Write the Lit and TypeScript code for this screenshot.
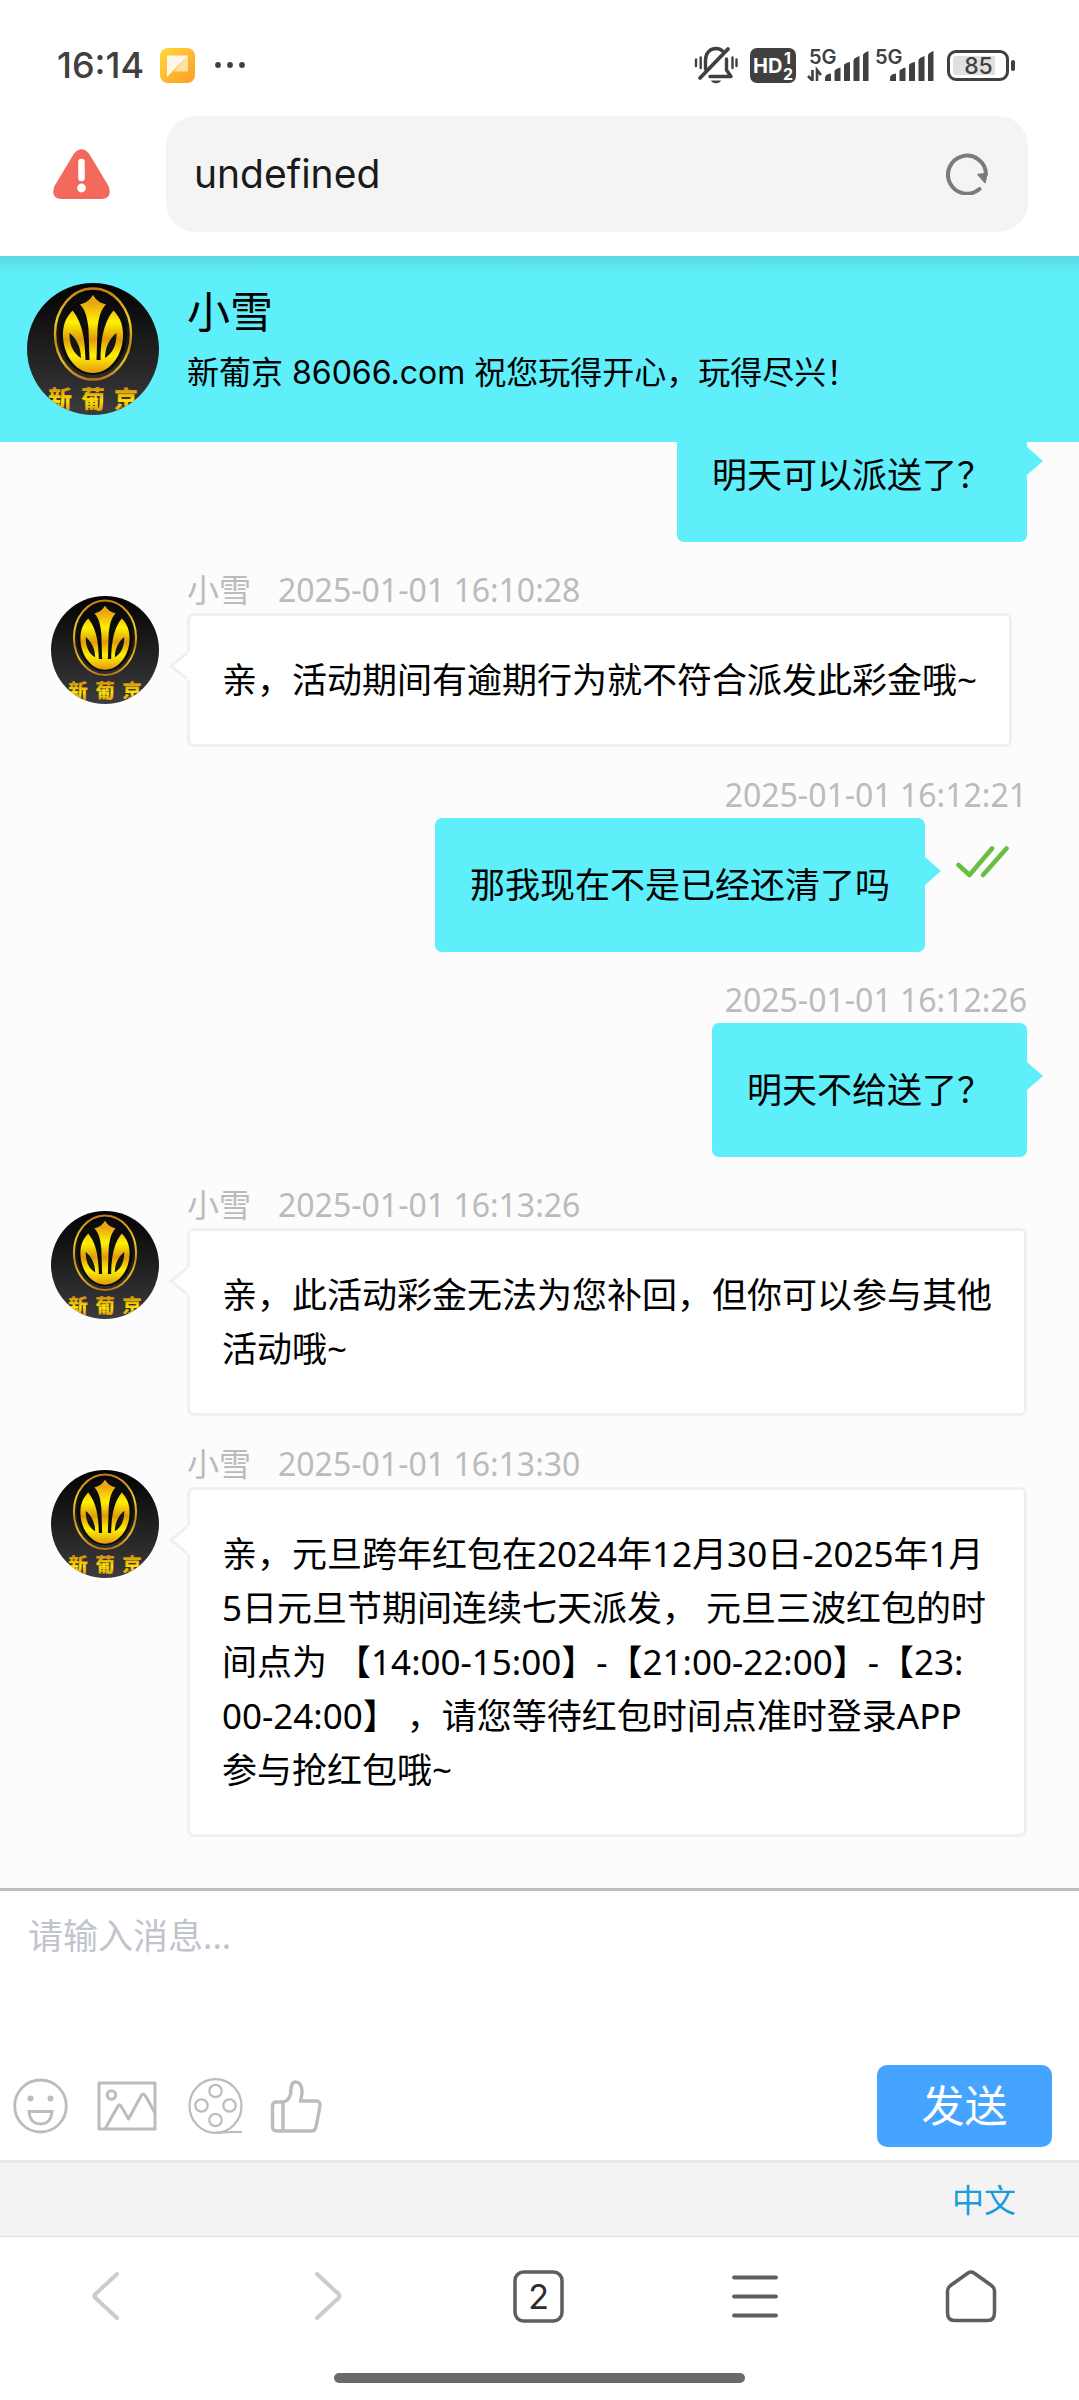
import { LitElement, html, css, svg, nothing } from "lit";
import { customElement, property, state } from "lit/decorators.js";
import { classMap } from "lit/directives/class-map.js";

interface Message {
  from: "agent" | "me";
  text: string;
  time?: string;
  read?: boolean;
}

const AGENT = "小雪";

const MESSAGES: Message[] = [
  { from: "me", text: "明天可以派送了？" },
  { from: "agent", time: "2025-01-01 16:10:28", text: "亲，活动期间有逾期行为就不符合派发此彩金哦~" },
  { from: "me", time: "2025-01-01 16:12:21", text: "那我现在不是已经还清了吗", read: true },
  { from: "me", time: "2025-01-01 16:12:26", text: "明天不给送了？" },
  { from: "agent", time: "2025-01-01 16:13:26", text: "亲，此活动彩金无法为您补回，但你可以参与其他活动哦~" },
  {
    from: "agent",
    time: "2025-01-01 16:13:30",
    text: "亲，元旦跨年红包在2024年12月30日-2025年1月5日元旦节期间连续七天派发， 元旦三波红包的时间点为 【14:00-15:00】-【21:00-22:00】-【23:\n00-24:00】 ，请您等待红包时间点准时登录APP参与抢红包哦~",
  },
];

/* Round brand logo used in the header and beside agent messages. */
@customElement("brand-avatar")
class BrandAvatar extends LitElement {
  static styles = css`
    :host { display: block; flex: none; border-radius: 50%; overflow: hidden; }
    .logo { display: block; width: 100%; height: 100%; }
    .brand { font-family: "Noto Sans CJK SC", sans-serif; font-weight: 900; font-size: 24px; }
  `;
  render() {
    return html`<svg class="logo" viewBox="0 0 132 132" role="img" aria-label="新葡京">
      <defs>
        <linearGradient id="bg" x1="0" y1="0" x2="0" y2="1">
          <stop offset="0" stop-color="#020202" /><stop offset="1" stop-color="#3c3c3e" />
        </linearGradient>
        <linearGradient id="gold" gradientUnits="userSpaceOnUse" x1="0" y1="10" x2="0" y2="90">
          <stop offset="0" stop-color="#f0b010" /><stop offset="0.12" stop-color="#e8a414" />
          <stop offset="0.36" stop-color="#fff200" /><stop offset="0.58" stop-color="#e09a0c" />
          <stop offset="0.78" stop-color="#fff000" /><stop offset="1" stop-color="#e39a10" />
        </linearGradient>
        <linearGradient id="ring" x1="0" y1="0" x2="0" y2="1">
          <stop offset="0" stop-color="#c27b1c" /><stop offset="0.35" stop-color="#f4d21a" />
          <stop offset="0.6" stop-color="#c98a14" /><stop offset="0.8" stop-color="#e8c01c" /><stop offset="1" stop-color="#b8741c" />
        </linearGradient>
        <linearGradient id="word" gradientUnits="userSpaceOnUse" x1="0" y1="103" x2="0" y2="128">
          <stop offset="0" stop-color="#c98412" /><stop offset="0.6" stop-color="#ffe000" /><stop offset="1" stop-color="#d89a10" />
        </linearGradient>
      </defs>
      <rect width="132" height="132" fill="url(#bg)" />
      <ellipse cx="66" cy="51" rx="38" ry="45.5" fill="none" stroke="url(#ring)" stroke-width="2.4" />
      <ellipse cx="66" cy="51" rx="34" ry="41" fill="#0c0c0c" />
      <g fill="url(#gold)">
        <path d="M66 12C63 17 59 20 53 21.500C58 26 60.500 35 61.500 46L62.500 77H69.500L70.500 46C71.500 35 74 26 79 21.500C73 20 69 17 66 12Z" />
        <path d="M45.500 27.500C38 35 35.500 44 36 54C37 74 50 90 66 90C82 90 95 74 96 54C96.500 44 94 35 86.500 27.500C78 38 74 52 73.500 77H58.500C58 52 54 38 45.500 27.500Z" />
      </g>
      <path d="M42.500 50C49 55 54 64 54 75C47 71 42 62 42.500 50ZM89.500 50C83 55 78 64 78 75C85 71 90 62 89.500 50Z" fill="#151512" />
      <g class="brand" fill="url(#word)" text-anchor="middle">
        <text x="33" y="125">新</text><text x="66" y="125">葡</text><text x="99" y="125">京</text>
      </g>
    </svg>`;
  }
}

@customElement("chat-message")
class ChatMessage extends LitElement {
  @property({ attribute: false }) message!: Message;

  static styles = css`
    :host { display: block; flex: none; }
    .row { display: flex; gap: 28px; padding: 0 52px 0 51px; }
    .row.me { justify-content: flex-end; }
    .face { width: 108px; height: 108px; margin-top: 28px; }
    .col { display: flex; flex-direction: column; align-items: flex-start; min-width: 0; flex: 1; }
    .me .col { align-items: flex-end; }
    .meta { display: flex; gap: 27px; height: 45px; line-height: 44px; font-size: 32px; color: #bbb; }
    .line { display: flex; max-width: 100%; }
    .bubble {
      position: relative; box-sizing: border-box; margin: 0; min-width: 0;
      padding: 37px 32px; border: 3px solid #f0f0f0; border-radius: 7px;
      background: #fff; color: #000; font-size: 35px; line-height: 54px;
      white-space: pre-line; word-break: break-all;
    }
    .me .bubble { background: #5eeffa; border-color: #5eeffa; }
    .tail { position: absolute; top: 36px; left: -22px; width: 22px; height: 28px; display: block; }
    .me .tail { left: auto; right: -22px; }
    .tick { flex: none; width: 53px; height: 32px; margin: 28px 18px 0 31px; }
  `;

  render() {
    const m = this.message;
    const me = m.from === "me";
    return html`<article class=${classMap({ row: true, me })}>
      ${me ? nothing : html`<brand-avatar class="face"></brand-avatar>`}
      <div class="col">
        ${m.time
          ? html`<div class="meta">${me ? nothing : html`<span>${AGENT}</span>`}<time>${m.time}</time></div>`
          : nothing}
        <div class="line">
          <p class="bubble">${m.text}<svg class="tail" viewBox="0 0 22 28" aria-hidden="true">
              ${me
                ? svg`<path d="M0 0H3L19 14L3 28H0Z" fill="#5eeffa" />`
                : svg`<path d="M22 0H19L3 14L19 28H22Z" fill="#fff" /><path d="M19 1L3 14L19 27" fill="none" stroke="#f0f0f0" stroke-width="3" />`}
            </svg></p>
          ${m.read
            ? html`<svg class="tick" viewBox="0 0 53 32" role="img" aria-label="已读" fill="none" stroke="#68bf40" stroke-width="4.600" stroke-linecap="round" stroke-linejoin="round">
                <path d="M2.500 19L13.500 29L36 2.500M27 29L50.500 2.500" />
              </svg>`
            : nothing}
        </div>
      </div>
    </article>`;
  }
}

@customElement("app-root")
class AppRoot extends LitElement {
  @state() private draft = "";

  static styles = css`
    :host {
      display: flex; flex-direction: column; height: 100vh; min-height: 1200px; overflow: hidden;
      background: #fff; color: #000;
      font-family: "Noto Sans", "Noto Sans CJK SC", sans-serif;
    }
    svg { display: block; flex: none; }
    button { border: 0; margin: 0; padding: 0; background: none; font: inherit; color: inherit; display: block; }

    .status { display: flex; align-items: center; height: 32px; padding: 49px 64px 0 57px; color: #404040; flex: none; }
    .clock { font: 500 36px/32px Inter, sans-serif; }
    .app { width: 35px; height: 35px; margin: 0 20px 0 16px; }
    .more { width: 30px; height: 8px; margin-right: auto; }
    .bell { width: 44px; height: 38px; margin-right: 12px; }
    .hd { width: 46px; height: 35px; margin-right: 11px; }
    .sig { width: 62px; height: 46px; margin-right: 6px; }
    .sig.two { width: 59px; margin-right: 13px; }
    .batt { width: 68px; height: 31px; }
    .st { font-family: Inter, sans-serif; }

    .address { display: flex; align-items: center; padding: 35px 51px 24px 53px; flex: none; }
    .warn { width: 57px; height: 50px; margin-right: 56px; }
    .field { display: flex; align-items: center; flex: 1; min-width: 0; height: 116px; padding: 0 40px 0 28px; border-radius: 30px; background: #f4f4f4; box-sizing: border-box; }
    .url { flex: 1; min-width: 0; border: 0; padding: 0; outline: 0; background: none; color: #1a1a1a; font: 39px/52px Inter, sans-serif; }
    .reload svg { width: 42px; height: 42px; }

    .head {
      display: flex; gap: 28px; padding: 27px; flex: none; align-items: flex-start;
      background: linear-gradient(#59d9e3, #5eeffa 18px) #5eeffa;
    }
    .portrait { width: 132px; height: 132px; }
    .who { display: flex; flex-direction: column; gap: 8px; font-family: Inter, "Noto Sans CJK SC", sans-serif; }
    .name { margin: 0; font-size: 43px; line-height: 58px; font-weight: 400; }
    .motto { margin: 0; font-size: 32px; line-height: 48px; }

    .log {
      display: flex; flex-direction: column; justify-content: flex-end; gap: 26px;
      flex: 1; min-height: 0; overflow: hidden; padding-bottom: 51px; background: #fcfcfc;
    }

    .compose { display: flex; flex-direction: column; flex: none; border-top: 3px solid #bfbfbf; }
    .input {
      display: block; box-sizing: border-box; width: 100%; height: 174px; padding: 19px 28px; border: 0; outline: 0; resize: none;
      background: none; color: #000; font: 35px/52px "Noto Sans", "Noto Sans CJK SC", sans-serif;
    }
    .input::placeholder { color: #c0c4cc; opacity: 1; }
    .tools { display: flex; align-items: center; padding: 0 27px 13px 13px; color: #bcbcbc; }
    .smile { width: 55px; height: 56px; margin-right: 29px; }
    .pic { width: 60px; height: 50px; margin-right: 31px; }
    .film { width: 55px; height: 58px; margin-right: 27px; }
    .thumb { width: 52px; height: 54px; }
    .send { margin-left: auto; width: 175px; height: 82px; border-radius: 10px; background: #44a4ff; color: #fff; font-size: 43px; line-height: 82px; }

    .lang { display: flex; justify-content: flex-end; align-items: center; flex: none; height: 73px; padding-right: 63px; border-top: 3px solid #e8e8e8; border-bottom: 1px solid #e2e2e2; background: #f3f3f3; }
    .lang a { color: #1c9cdc; text-decoration: none; font-size: 32px; line-height: 48px; }

    .nav { display: grid; grid-template-columns: repeat(5, 1fr); flex: none; height: 118px; align-items: center; color: #5e5e5e; }
    .nav button { display: grid; place-items: center; height: 118px; }
    .nav svg { width: 54px; height: 54px; }
    .nav .off { color: #ccc; }
    .count { font-family: Inter, sans-serif; font-size: 34px; fill: #2c2c2c; }
    .bar { flex: none; width: 38%; height: 10px; margin: 18px auto 17px; border-radius: 5px; background: #6a6a6a; }
  `;

  private bars(x: number) {
    return svg`<path fill="currentColor" d="M${x} 33V30Q${x} 26 ${x + 6} 25.500V33ZM${x + 9.5} 33V23Q${x + 10} 21 ${x + 15.5} 19.500V33ZM${x + 19} 33V17Q${x + 20} 15 ${x + 25} 14V33ZM${x + 28.5} 33V12Q${x + 29} 10 ${x + 34.5} 8V33ZM${x + 38} 33V7Q${x + 38.5} 5 ${x + 43.5} 3V33Z" />`;
  }

  render() {
    return html`
      <header class="status">
        <span class="clock">16:14</span>
        <svg class="app" viewBox="0 0 35 35" aria-hidden="true">
          <defs><linearGradient id="note" x1="0" y1="0" x2="1" y2="1"><stop offset="0" stop-color="#ffd93d" /><stop offset="1" stop-color="#ff9a26" /></linearGradient></defs>
          <rect width="35" height="35" rx="8" fill="url(#note)" />
          <path d="M28 7V23.500H14Z" fill="#ffe0a0" />
          <path d="M7 7.500H28L7 29Z" fill="#fff8ea" />
        </svg>
        <svg class="more" viewBox="0 0 30 8" fill="currentColor" aria-hidden="true"><circle cx="3" cy="4" r="2.900" /><circle cx="15" cy="4" r="2.900" /><circle cx="27" cy="4" r="2.900" /></svg>
        <svg class="bell" viewBox="0 0 44 38" fill="none" stroke="currentColor" stroke-width="3.400" stroke-linecap="round" stroke-linejoin="round" aria-hidden="true">
          <path d="M6 32L34 3" stroke-width="3.800" />
          <path d="M11.500 23V14.500C11.500 7 16 2.500 22 2.500C25 2.500 27 3.500 28.500 5" />
          <path d="M16 30.500H37L32.500 24V13" />
          <path d="M17 34.500H27C26 38 18 38 17 34.500Z" fill="currentColor" stroke="none" />
          <path d="M2 13.500V20M6.700 11.500V22M38.500 11.500V22M42.500 13.500V20" stroke-width="2.400" />
        </svg>
        <svg class="hd" viewBox="0 0 46 35" aria-hidden="true">
          <rect width="46" height="35" rx="7" fill="currentColor" />
          <g class="st" fill="#fff" font-weight="700"><text x="3" y="25" font-size="20">HD</text><text x="34" y="16" font-size="16">1</text><text x="33" y="32" font-size="16">2</text></g>
        </svg>
        <svg class="sig" viewBox="0 -6 62 46" aria-hidden="true">
          <text class="st" x="2" y="16" font-size="20" font-weight="600" fill="currentColor">5G</text>
          <path d="M5.500 22V33M1 28L5 32" stroke="currentColor" stroke-width="2.600" fill="none" /><path d="M10 33V22L14 27" stroke="currentColor" stroke-width="2.600" fill="none" />
          ${this.bars(18)}
        </svg>
        <svg class="sig two" viewBox="0 -6 59 46" aria-hidden="true">
          <text class="st" x="0" y="16" font-size="20" font-weight="600" fill="currentColor">5G</text>
          ${this.bars(15)}
        </svg>
        <svg class="batt" viewBox="0 0 68 31" aria-hidden="true">
          <rect x="1.500" y="1.500" width="59" height="28" rx="7.500" fill="none" stroke="currentColor" stroke-width="3" />
          <path d="M9 6H48V25H9Q6 25 6 22V9Q6 6 9 6Z" fill="#e0e0e0" />
          <rect x="64" y="10" width="4" height="11" rx="2" fill="currentColor" />
          <text class="st" x="31.500" y="24" font-size="23" font-weight="500" text-anchor="middle" fill="currentColor">85</text>
        </svg>
      </header>

      <div class="address">
        <svg class="warn" viewBox="0 0 57 50" role="img" aria-label="不安全">
          <path d="M21 4.500Q28.500 -4 36 4.500L55.500 37Q60 49 48.500 50H8.500Q-3 49 1.500 37Z" fill="#f4695e" />
          <path d="M28.500 13V29" stroke="#fff" stroke-width="6.500" stroke-linecap="round" /><circle cx="28.500" cy="39" r="4.400" fill="#fff" />
        </svg>
        <div class="field">
          <input class="url" type="text" aria-label="网址" .value=${"undefined"} />
          <button class="reload" type="button" aria-label="刷新">
            <svg viewBox="0 0 42 42" fill="none" stroke="#7b7b7b" stroke-width="4" stroke-linecap="round">
              <path d="M33.500 36A19 19 0 1 1 40 21" /><path d="M32 21.500L41 20.500L39 29.500Z" fill="#7b7b7b" stroke-width="1.500" stroke-linejoin="round" />
            </svg>
          </button>
        </div>
      </div>

      <section class="head">
        <brand-avatar class="portrait"></brand-avatar>
        <div class="who">
          <h1 class="name">${AGENT}</h1>
          <p class="motto">新葡京 86066.com 祝您玩得开心，玩得尽兴！</p>
        </div>
      </section>

      <main class="log">${MESSAGES.map((m) => html`<chat-message .message=${m}></chat-message>`)}</main>

      <form class="compose" @submit=${(e: Event) => e.preventDefault()}>
        <textarea class="input" aria-label="消息" placeholder="请输入消息..." .value=${this.draft}
          @input=${(e: Event) => (this.draft = (e.target as HTMLTextAreaElement).value)}></textarea>
        <div class="tools">
          <button type="button" aria-label="表情"><svg class="smile" viewBox="0 0 55 56" fill="none" stroke="currentColor" stroke-width="2.800">
            <ellipse cx="27.500" cy="28" rx="25.800" ry="26" /><circle cx="17.500" cy="20.500" r="3" fill="currentColor" stroke="none" /><circle cx="37.500" cy="20.500" r="3" fill="currentColor" stroke="none" />
            <path d="M16 33.500H39Q38 46 27.500 46Q17 46 16 33.500Z" />
          </svg></button>
          <button type="button" aria-label="图片"><svg class="pic" viewBox="0 0 60 50" fill="none" stroke="currentColor" stroke-width="3" stroke-linejoin="round">
            <rect x="2" y="2" width="56" height="46" /><circle cx="14.500" cy="14" r="4.300" />
            <path d="M8 48L21 25Q22.500 22.500 24 25L31.500 38L44 15Q46 11 48.500 15L58 32" />
          </svg></button>
          <button type="button" aria-label="视频"><svg class="film" viewBox="0 0 55 58" fill="none" stroke="currentColor" stroke-width="2.200">
            <ellipse cx="27.500" cy="29" rx="26" ry="26.800" /><circle cx="27.500" cy="14" r="6.200" /><circle cx="13.500" cy="28.500" r="6.200" /><circle cx="41.500" cy="28.500" r="6.200" /><circle cx="27.500" cy="43" r="6.200" />
            <path d="M27.500 55.800C36 55.800 34 55 42 55H54" />
          </svg></button>
          <button type="button" aria-label="点赞"><svg class="thumb" viewBox="0 0 52 54" fill="none" stroke="currentColor" stroke-width="3.400" stroke-linejoin="round">
            <path d="M2.500 27Q2.500 23 6.500 23H13Q19 22 20.500 15C21 9 21 3 25.500 3C31 3 34 10 30.500 22H46Q50.500 22 50 27L46 48Q45 52 41 52H7Q2.500 52 2.500 47.500ZM13 23V52" />
          </svg></button>
          <button class="send" type="submit">发送</button>
        </div>
      </form>

      <div class="lang"><a href="#lang">中文</a></div>

      <nav class="nav">
        <button type="button" class="off" aria-label="后退"><svg viewBox="0 0 54 54" fill="none" stroke="currentColor" stroke-width="4" stroke-linecap="round"><path d="M36 5L14.500 25Q12.500 27 14.500 29L36 49" /></svg></button>
        <button type="button" class="off" aria-label="前进"><svg viewBox="0 0 54 54" fill="none" stroke="currentColor" stroke-width="4" stroke-linecap="round"><path d="M20 5L41.500 25Q43.500 27 41.500 29L20 49" /></svg></button>
        <button type="button" aria-label="标签页"><svg viewBox="0 0 54 54" fill="none" stroke="currentColor" stroke-width="3.500"><rect x="3" y="3" width="47" height="49" rx="8.500" /><text class="count" x="26.500" y="39.500" text-anchor="middle" stroke="none">2</text></svg></button>
        <button type="button" aria-label="菜单"><svg viewBox="0 0 54 54" fill="none" stroke="currentColor" stroke-width="3.800" stroke-linecap="round"><path d="M6 8.500H48M6 27.500H48M6 46.500H48" /></svg></button>
        <button type="button" aria-label="主页"><svg viewBox="0 0 54 54" fill="none" stroke="currentColor" stroke-width="3.500" stroke-linejoin="round"><path d="M24 4Q27 2 30 4L47.500 16.500Q50.500 19 50.500 22V43.500Q50.500 51.500 43.500 51.500H10.500Q3.500 51.500 3.500 43.500V22Q3.500 19 6.500 16.500Z" /></svg></button>
      </nav>
      <div class="bar"></div>
    `;
  }
}
